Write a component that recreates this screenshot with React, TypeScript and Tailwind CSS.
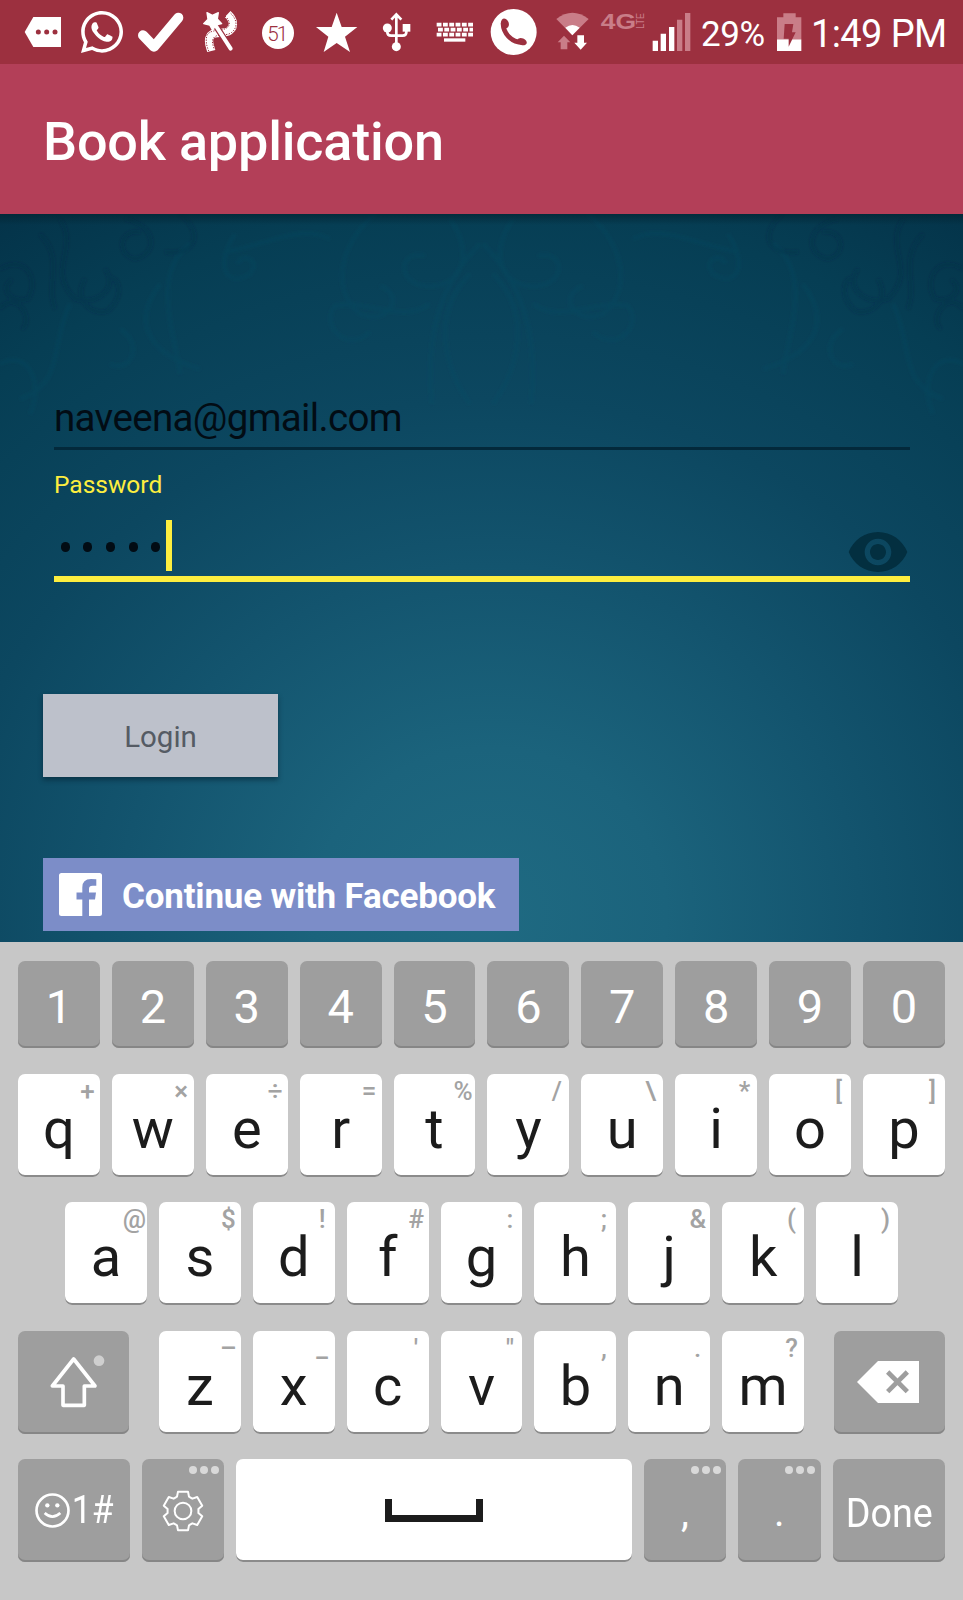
import type { ReactNode } from "react";
import { FaWhatsapp } from "react-icons/fa";
import { MdVisibility } from "react-icons/md";

const BAR = "#9c303f";
const FADED = "#c97d88";

/* A status-bar icon: the view box is three units to the pixel, 64px tall. */
function Slot({ x, w, children }: { x: number; w: number; children: ReactNode }) {
  return (
    <svg className="h-16 shrink-0" width={w / 3} height={64} viewBox={`${x} 0 ${w} 192`} fill="#fff">
      {children}
    </svg>
  );
}

function StatusBar() {
  return (
    <header className="flex h-16 shrink-0 items-center overflow-hidden bg-[#9c303f] pl-5 text-white">
      <Slot x={60} w={150}>
        <path d="M74 96 100 51H183V141H100Z" />
        <g fill={BAR}>
          <circle cx="115" cy="96" r="7.5" />
          <circle cx="140" cy="96" r="7.5" />
          <circle cx="165" cy="96" r="7.5" />
        </g>
      </Slot>
      <div className="flex h-16 w-[60px] shrink-0 items-center justify-center pl-1">
        <FaWhatsapp className="h-12 w-[42px]" />
      </div>
      <Slot x={390} w={180}>
        <path d="M429 106 462 140 535 53" fill="none" stroke="#fff" strokeWidth="30" strokeLinecap="round" strokeLinejoin="round" />
      </Slot>
      <Slot x={570} w={180}>
        <path d="M683 42C700 58 706 78 688 92C672 104 640 92 630 110C622 124 630 138 634 153" fill="none" stroke="#fff" strokeWidth="25" />
        <path d="M675 48C690 62 692 76 680 84C666 94 634 86 621 105C616 124 620 138 626 153M692 40C712 58 714 84 694 98C678 110 652 98 640 115C634 126 640 138 643 149" fill="none" stroke={BAR} strokeWidth="3" strokeDasharray="4 4" />
        <path d="M648 78 692 146" stroke={BAR} strokeWidth="19" strokeLinecap="round" />
        <path d="M648 78 692 146" stroke="#fff" strokeWidth="12" strokeLinecap="round" />
        <path d="M621 38 637 46 655 38 652 57 665 71 647 75 638 91 629 75 611 71 624 58Z" stroke="#fff" strokeWidth="4" strokeLinejoin="round" />
      </Slot>
      <Slot x={750} w={180}>
        <circle cx="834" cy="99" r="48" />
        <text x="830" y="122" textAnchor="middle" fill={BAR} className="font-['Roboto'] text-[62px] font-light tracking-[-6px]">51</text>
      </Slot>
      <Slot x={930} w={180}>
        <path d="M1010 38 1025 81H1072L1035 110 1050 156 1010 129 971 156 985 110 948 81H995Z" />
      </Slot>
      <Slot x={1110} w={180}>
        <path d="M1189 46V135M1174 59 1189 43 1204 59M1162 88V97Q1162 107 1173 107H1208Q1219 107 1219 97V88" fill="none" stroke="#fff" strokeWidth="8" />
        <circle cx="1189" cy="140" r="13.5" />
        <circle cx="1162" cy="84" r="13.5" />
        <path d="M1208 72H1231V95H1208Z" />
      </Slot>
      <Slot x={1290} w={150}>
        <path d="M1310 74H1419M1310 104H1419" fill="none" stroke="#fff" strokeWidth="11" strokeDasharray="14.5 4.4" />
        <path d="M1314 89H1419" fill="none" stroke="#fff" strokeWidth="11" strokeDasharray="14.5 4.4" />
        <path d="M1332 115H1396V125H1332Z" />
      </Slot>
      <Slot x={1440} w={210}>
        <circle cx="1541" cy="96" r="69" />
        <g fill={BAR}>
          <path d="M1509 70C1510 98 1532 127 1568 128" fill="none" stroke={BAR} strokeWidth="14" strokeLinecap="round" />
          <ellipse cx="1515" cy="70" rx="11" ry="15" transform="rotate(-24 1515 70)" />
          <ellipse cx="1566" cy="125" rx="15" ry="10" transform="rotate(22 1566 125)" />
        </g>
      </Slot>
      <Slot x={1650} w={138}>
        <path d="M1669 57Q1717 20 1766 57L1717 106Z" fill={FADED} />
        <path d="M1696 83Q1717 67 1739 83L1717 106Z" />
        <path d="M1692 107 1711 127H1702V148H1682V127H1673Z" fill={FADED} />
        <path d="M1742 149 1761 128H1752V106H1732V128H1723Z" />
      </Slot>
      <Slot x={1788} w={150}>
        <text x="1802" y="87" textLength="106" lengthAdjust="spacingAndGlyphs" fill={FADED} className="font-['Liberation_Sans'] text-[65px] font-bold">4G</text>
        <text transform="translate(1932 86) rotate(-90)" textLength="47" lengthAdjust="spacingAndGlyphs" fill={FADED} className="font-['Liberation_Sans'] text-[30px]">LTE</text>
      </Slot>
      <Slot x={1938} w={150}>
        <path d="M1958 122H1974V153H1958ZM1982 101H1998V153H1982ZM2007 81H2023V153H2007Z" />
        <path d="M2031 59H2047V153H2031ZM2055 39H2071V153H2055Z" fill={FADED} />
      </Slot>
      <span className="w-[74px] shrink-0 whitespace-nowrap pl-[5px] pt-1.5 text-[35px] leading-[62px] tracking-[-0.4px]">29%</span>
      <Slot x={2310} w={120}>
        <path d="M2331 52H2350V40H2387V52H2404V118H2331Z" fill={FADED} />
        <path d="M2331 118H2404V153H2331Z" />
        <path d="M2354 72H2380L2376 97H2387L2366 140V116H2351Z" fill={BAR} />
      </Slot>
      <span className="shrink-0 whitespace-nowrap pl-px pt-1 text-[38px] leading-[62px] tracking-[-0.6px]">1:49 PM</span>
    </header>
  );
}

function Ornament() {
  return (
    <g fill="none" strokeWidth="4">
      <g stroke="#0d5068" strokeOpacity=".2">
        <path d="M480 30C440 70 425 120 432 190M450 5C475 40 462 75 425 72C395 68 400 35 425 42M375 0C340 30 330 75 360 100C390 112 405 80 380 72M330 25C300 10 270 30 225 38M235 20C215 50 225 75 250 60C262 45 240 38 238 50M430 90C400 110 370 85 335 92C320 110 345 140 370 118M470 60C430 100 445 155 470 190" />
        <path d="M190 30C150 60 175 120 180 160M160 70C130 110 150 140 200 155M70 90C50 130 65 170 20 185M0 150C25 135 45 165 30 200M120 115C145 130 130 160 110 150" />
      </g>
      <g stroke="#022a3e" strokeOpacity=".22">
        <path d="M125 5C155 10 160 40 135 45C115 40 120 15 140 18M180 0C205 20 195 42 165 38M0 55C25 40 40 65 28 85C8 90 0 72 12 66M60 5C80 35 45 55 75 85C95 92 120 75 105 55M40 20C65 45 45 70 55 95M85 65C70 90 100 105 110 95C125 80 118 60 108 65M0 95C15 75 35 105 22 115" />
      </g>
    </g>
  );
}

function Backdrop() {
  return (
    <svg className="absolute inset-0 h-full w-full" viewBox="0 0 963 728" preserveAspectRatio="none" aria-hidden="true">
      <defs>
        <radialGradient id="glow" gradientUnits="userSpaceOnUse" cx="0" cy="0" r="1" gradientTransform="translate(490 700) scale(880 830)">
          <stop offset="0" stopColor="#1f6a82" />
          <stop offset=".2" stopColor="#1b637c" />
          <stop offset=".42" stopColor="#13546e" />
          <stop offset=".62" stopColor="#0c4760" />
          <stop offset=".85" stopColor="#063e54" />
          <stop offset="1" stopColor="#04344a" />
        </radialGradient>
        <linearGradient id="drop" x1="0" x2="0" y1="0" y2="1">
          <stop offset="0" stopColor="#022431" stopOpacity=".7" />
          <stop offset="1" stopColor="#022431" stopOpacity="0" />
        </linearGradient>
        <filter id="soft" x="-10%" y="-10%" width="120%" height="120%">
          <feGaussianBlur stdDeviation="1.8" />
        </filter>
      </defs>
      <rect width="963" height="728" fill="url(#glow)" />
      <g filter="url(#soft)">
        <Ornament />
        <g transform="translate(963 0) scale(-1 1)">
          <Ornament />
        </g>
      </g>
      <rect width="963" height="11" fill="url(#drop)" />
    </svg>
  );
}

function LoginForm() {
  return (
    <main className="relative h-[728px] shrink-0 overflow-hidden">
      <Backdrop />
      <div className="relative flex flex-col items-start pl-[43px]">
        <div className="ml-[11px] mt-[172px] flex h-[64px] w-[856px] items-start border-b-[3px] border-[#03293b] text-[38.5px] leading-[64px] text-[#020c14]">
          <span className="tracking-[-0.65px]">naveena@gmail.com</span>
        </div>
        <label className="ml-[11px] mt-[20px] text-[24.5px] leading-[30px] text-[#fdee3f]">Password</label>
        <div className="ml-[11px] mt-[20px] flex h-[62px] w-[856px] items-start border-b-[6px] border-[#fdee3f]">
          <div className="mt-[22px] flex gap-[13.7px] pl-[6.5px]">
            {[0, 1, 2, 3, 4].map((n) => (
              <span key={n} className="h-[10px] w-[9px] rounded-full bg-[#020c14]" />
            ))}
          </div>
          <span className="ml-[5.7px] h-[51px] w-[6px] bg-[#fdee3f]" />
          <MdVisibility className="ml-auto size-16 shrink-0 text-[#032f40]" />
        </div>
        <button className="mt-[112px] h-[83px] w-[235px] bg-[#bdc1cb] pt-1 text-[29.5px] text-[#555b64] shadow-[0_3px_5px_rgba(0,20,30,0.45)]">Login</button>
        <button className="mt-[81px] flex h-[73px] w-[476px] items-center bg-[#7c8dc8] pl-4 text-white">
          <svg width="43" height="43" viewBox="0 0 43 43" className="shrink-0">
            <path fill="#fff" d="M2.5 0H40.5Q43 0 43 2.5V40.5Q43 43 40.5 43H30V26.5H36L37 19.500H30V16Q30 12.800 33.500 12.800H37.300V6.300Q35 6 32 6Q23.300 6 23.300 14.500V19.500H17.500V26.500H23.300V43H2.500Q0 43 0 40.500V2.500Q0 0 2.500 0Z" />
          </svg>
          <span className="whitespace-nowrap pl-5 pt-[5px] text-[35px] font-bold leading-10 tracking-[-0.2px]">Continue with Facebook</span>
        </button>
      </div>
    </main>
  );
}

const WHITE_KEY = "relative flex h-[103px] w-[81.9px] shrink-0 justify-center rounded-[7px] bg-white text-[#1c1c1c] shadow-[inset_0_-2px_0_#8b8b8b]";
const GRAY_KEY = "relative flex shrink-0 justify-center rounded-[7px] bg-[#9e9e9e] text-white shadow-[inset_0_-2px_0_#868686]";

function Letter({ pair }: { pair: string }) {
  return (
    <div className={WHITE_KEY}>
      <span className="text-[56px] leading-[111px]">{pair[0]}</span>
      <span className="absolute right-[-7.5px] top-0 w-10 text-center text-[26px] font-medium leading-[35px] text-[#a3a3a3]">{pair[1]}</span>
    </div>
  );
}

function Dots() {
  return (
    <div className="absolute right-[5.5px] top-[7px] flex gap-[3px]">
      <span className="size-[8px] rounded-full bg-[#d9d9d9]" />
      <span className="size-[8px] rounded-full bg-[#d9d9d9]" />
      <span className="size-[8px] rounded-full bg-[#d9d9d9]" />
    </div>
  );
}

function gearPath() {
  const points: string[] = [];
  for (let k = 0; k < 6; k++) {
    const tooth: [number, number][] = [[-25, 39], [-18, 43], [-15, 58], [15, 58], [18, 43], [25, 39]];
    tooth.forEach(([across, out]) => {
      const a = (k * Math.PI) / 3;
      points.push(`${(across * Math.cos(a) + out * Math.sin(a)).toFixed(1)} ${(across * Math.sin(a) - out * Math.cos(a)).toFixed(1)}`);
    });
  }
  return `M${points.join("L")}Z`;
}

function Keyboard() {
  return (
    <section className="flex h-[658px] shrink-0 flex-col bg-[#c7c7c7] px-[18px] pt-[19px]">
      <div className="flex justify-between">
        {"1234567890".split("").map((d) => (
          <div key={d} className={`${GRAY_KEY} h-[87px] w-[81.9px]`}>
            <span className="text-[47px] leading-[91px]">{d}</span>
          </div>
        ))}
      </div>
      <div className="mt-[25.500px] flex justify-between">
        {["q+", "w×", "e÷", "r=", "t%", "y/", "u\\", "i*", "o[", "p]"].map((p) => (
          <Letter key={p} pair={p} />
        ))}
      </div>
      <div className="mt-[25.500px] flex gap-3 pl-[47px]">
        {["a@", "s$", "d!", "f#", "g:", "h;", "j&", "k(", "l)"].map((p) => (
          <Letter key={p} pair={p} />
        ))}
      </div>
      <div className="mt-[25.500px] flex justify-between">
        <div className={`${GRAY_KEY} h-[103px] w-[111px]`}>
          <svg width="111" height="103" viewBox="54 453 333 309">
            <path d="M221 537 285 618H253V676H189V618H157Z" fill="none" stroke="#fff" strokeWidth="11" strokeLinejoin="round" />
            <circle cx="297" cy="542" r="16" fill="#cfcfcf" />
          </svg>
        </div>
        <div className="flex gap-3">
          {["z–", "x_", "c'", 'v"', "b,", "n.", "m?"].map((p) => (
            <Letter key={p} pair={p} />
          ))}
        </div>
        <div className={`${GRAY_KEY} h-[103px] w-[111px]`}>
          <svg width="111" height="103" viewBox="1062 453 333 309">
            <path d="M1131 606 1194 543H1317V669H1194Z" fill="#fff" />
            <path d="M1223 576 1282 635M1282 576 1223 635" stroke="#9e9e9e" strokeWidth="14" />
          </svg>
        </div>
      </div>
      <div className="mt-[25.500px] flex gap-3">
        <div className={`${GRAY_KEY} h-[103px] w-28 items-center`}>
          <svg width="35" height="35" viewBox="0 0 105 105" className="shrink-0">
            <circle cx="52.500" cy="52.500" r="48" fill="none" stroke="#fff" strokeWidth="8" />
            <circle cx="37" cy="37" r="6.500" fill="#fff" />
            <circle cx="67" cy="37" r="6.500" fill="#fff" />
            <path d="M29 60Q52 82 76 60" fill="none" stroke="#fff" strokeWidth="8" />
          </svg>
          <span className="-mr-1 origin-left scale-x-[0.93] pl-0.5 text-[38px]">1#</span>
        </div>
        <div className={`${GRAY_KEY} h-[103px] w-[82px] items-center`}>
          <Dots />
          <svg width="42" height="42" viewBox="-63 -63 126 126">
            <path d={gearPath()} fill="none" stroke="#fff" strokeWidth="6" strokeLinejoin="round" />
            <circle r="25" fill="none" stroke="#fff" strokeWidth="6" />
          </svg>
        </div>
        <div className="flex h-[103px] w-[396px] items-center justify-center rounded-[7px] bg-white shadow-[inset_0_-2px_0_#8b8b8b]">
          <div className="h-[23px] w-[98px] border-x-[7.500px] border-b-[7.500px] border-[#1c1c1c]" />
        </div>
        <div className={`${GRAY_KEY} h-[103px] w-[82px]`}>
          <Dots />
          <span className="text-[40px] leading-[108px]">,</span>
        </div>
        <div className={`${GRAY_KEY} h-[103px] w-[82.500px]`}>
          <Dots />
          <span className="text-[40px] leading-[108px]">.</span>
        </div>
        <div className={`${GRAY_KEY} h-[103px] w-28`}>
          <span className="scale-x-[0.92] pl-0.5 text-[41px] leading-[108px]">Done</span>
        </div>
      </div>
    </section>
  );
}

export default function App() {
  return (
    <div className="flex h-[1600px] w-[963px] flex-col overflow-hidden font-['Roboto',sans-serif]">
      <StatusBar />
      <div className="flex h-[150px] shrink-0 items-center bg-[#b33f58] pl-[43px] text-white">
        <h1 className="pt-1.5 text-[54px] font-medium leading-[64px] tracking-[-0.2px]">Book application</h1>
      </div>
      <LoginForm />
      <Keyboard />
    </div>
  );
}
